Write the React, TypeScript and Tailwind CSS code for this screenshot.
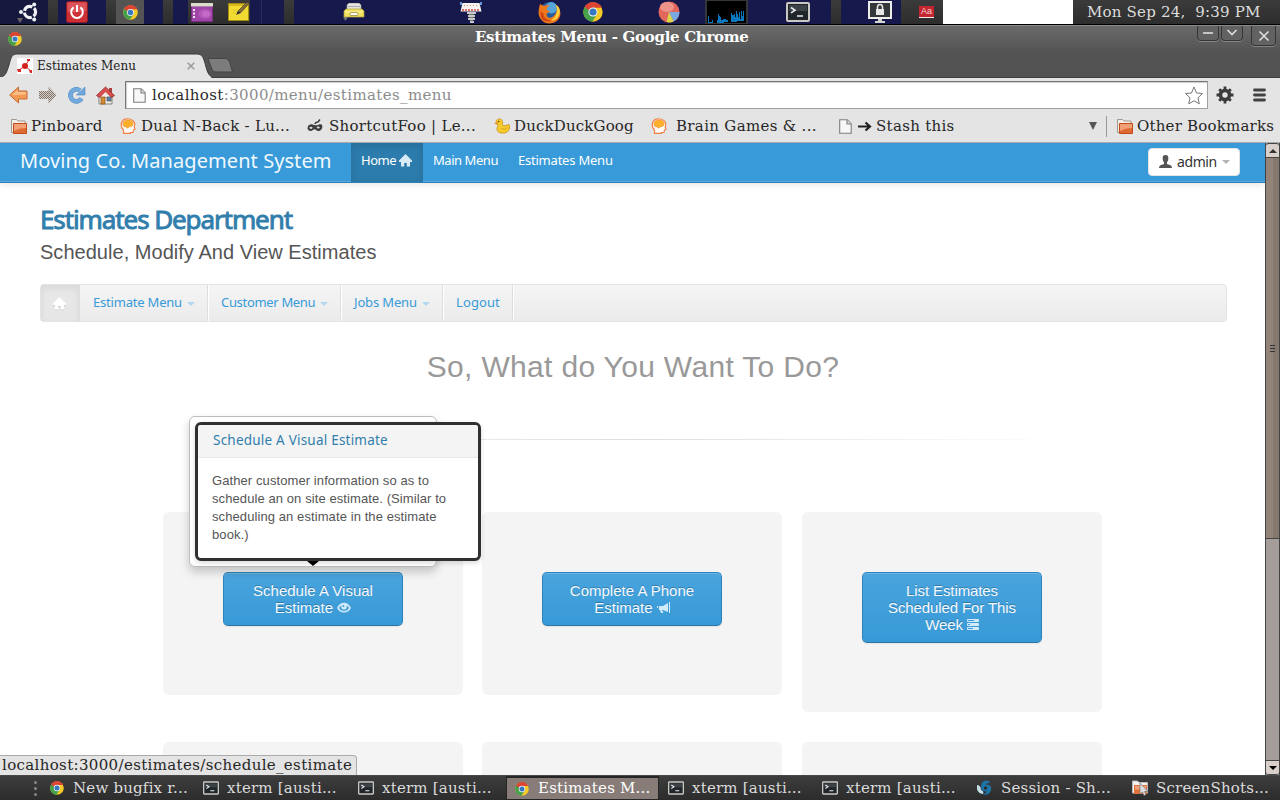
import React from 'react';

type P = { className?: string };

const slab = "font-['DejaVu_Serif',serif] whitespace-pre";
const human = "font-['Noto_Sans',sans-serif] whitespace-nowrap";
const arial = "font-['Liberation_Sans',Arial,sans-serif]";

function Chrome({ className = 'size-4' }: P) {
  return (
    <svg viewBox="0 0 20 20" className={className + ' shrink-0'}>
      <circle cx="10" cy="10" r="9.7" fill="#f5c927" />
      <path d="M10 10 1.6 5.1A9.7 9.7 0 0 1 18.7 5.6H10Z" fill="#dc4434" />
      <path d="M1.6 5.1A9.7 9.7 0 0 0 9.2 19.7L13.9 12.2 10 10Z" fill="#47a14a" />
      <path d="M1.6 5.1 6 12.3 10 10V5.6Z" fill="#47a14a" />
      <path d="M1.6 5.1A9.7 9.7 0 0 1 18.7 5.6H10L6.1 8.5Z" fill="#dc4434" />
      <circle cx="10" cy="10" r="4.6" fill="#f4f7fa" />
      <circle cx="10" cy="10" r="3.6" fill="#3878c0" />
    </svg>
  );
}

function Ubuntu() {
  return (
    <svg viewBox="0 0 24 24" className="h-6 w-6">
      <path d="M1 18h6l-3 5z" fill="#666" />
      <circle cx="14" cy="12" r="5.6" fill="none" stroke="#eef0f4" strokeWidth="3.2" strokeDasharray="9.8 1.9" strokeDashoffset="5" />
      <circle cx="5" cy="12" r="2" fill="#eef0f4" />
      <circle cx="18.2" cy="4.6" r="2" fill="#eef0f4" />
      <circle cx="18.2" cy="19.4" r="2" fill="#eef0f4" />
    </svg>
  );
}

function Power() {
  return (
    <svg viewBox="0 0 22 22" className="size-[22px]">
      <rect x=".5" y=".5" width="21" height="21" rx="2" fill="#cd2f35" stroke="#8e1b20" />
      <path d="M1.5 1.5h19v8q-9 3-19 1z" fill="#dc5459" />
      <path d="M7.6 6.4a5.8 5.8 0 1 0 6.8 0M11 4v7" fill="none" stroke="#fff" strokeWidth="2" />
    </svg>
  );
}

function PurpleWindow() {
  return (
    <svg viewBox="0 0 22 19" className="h-[19px] w-[22px]">
      <rect width="22" height="19" fill="#7b2d84" />
      <rect x="1" y="4" width="20" height="14" fill="#a045a8" />
      <ellipse cx="14" cy="11" rx="6.500" ry="5" fill="#b457b9" />
      <ellipse cx="15" cy="11" rx="4" ry="3" fill="#c46bc8" />
      <rect width="22" height="3.5" fill="#dcdccd" />
      <path d="M2 6h2v2H2zM2 9.500h2v2H2zM2 13h2v2H2z" fill="#f3e7f3" />
    </svg>
  );
}

function Note() {
  return (
    <svg viewBox="0 0 22 20" className="h-5 w-[22px]">
      <rect x=".5" y="1.5" width="20" height="17" fill="#f2dc32" stroke="#a78c12" />
      <rect x="1" y="2" width="19" height="2" fill="#d6b820" />
      <path d="M4 8h5M4 11h4" stroke="#dfc62a" />
      <path d="m9 11 2-3 8-8 2 1.500-8 9z" fill="#8a6a3a" stroke="#443" strokeWidth=".7" />
      <path d="m8 13 2-4 3 2z" fill="#333" />
    </svg>
  );
}

function Drawer() {
  return (
    <svg viewBox="0 0 22 18" className="h-[18px] w-[22px]">
      <path d="M4 7V2l2-2h10l2 2v5z" fill="#e5e5df" stroke="#9b9b92" strokeWidth=".7" />
      <path d="M5 3.500h12" stroke="#aaa" />
      <path d="M1 8l2-2h16l2 2v6H1z" fill="#f2e15c" stroke="#b2a03b" strokeWidth=".7" />
      <path d="M2 9h18" stroke="#fdf6ae" />
      <rect x="7" y="9.500" width="8" height="3" rx="1" fill="#fffef3" stroke="#998a3c" strokeWidth=".8" />
      <path d="M0 14h5l-2.500 4z" fill="#777" />
    </svg>
  );
}

function Shutter() {
  return (
    <svg viewBox="0 0 22 21" className="h-[21px] w-[22px]">
      <path d="M1 0v3M21 0v3" stroke="#6a94da" strokeWidth="2" />
      <path d="M2.500 1h17l2 8.500H.5z" fill="#f6f2ef" />
      <path d="M2 8h18" stroke="#d04945" strokeWidth="1.500" strokeDasharray="2 1" />
      <path d="M4 3.500h14" stroke="#d98a87" strokeDasharray="1 2" />
      <path d="M7 10h9v2H7zM8 13h7v2H8zM8 16h7v2H8zM10 19h4v2h-4z" fill="#c9c9c9" />
      <path d="M9 12h5v1H9zM9 15h5v1H9zM10 18h3v1h-3z" fill="#777" />
    </svg>
  );
}

function Firefox() {
  return (
    <svg viewBox="0 0 24 24" className="size-[23px]">
      <circle cx="12" cy="11" r="10" fill="#245c9d" />
      <circle cx="14" cy="7" r="6" fill="#55a5dc" />
      <path d="M2 3c2 1 3 2 5 2 2-1 4-1 5 0-2 1-3 2-3 4 1 1 3 1 4 2-2 1-4 1-4 4 1 3 5 3 7 1 4-4 5-8 2-12 5 3 7 9 4 14-4 7-15 7-19 1C-1 14 1 8 2 3z" fill="#ef781b" />
      <path d="M2 5c0 5 1 7 4 8-1 4 4 8 9 7-5 3-11 1-12-4z" fill="#cf4314" />
      <path d="M19 4c5 3 5 10 1 14-2 2-5 3-7 2 6-2 8-9 6-16z" fill="#f8cf3d" />
    </svg>
  );
}

function Pie() {
  return (
    <svg viewBox="0 0 22 22" className="size-[22px]">
      <circle cx="11" cy="11" r="10.500" fill="#e2665b" />
      <ellipse cx="9" cy="6" rx="7" ry="5" fill="#ed938a" />
      <path d="M11 11h10.500A10.500 10.500 0 0 1 15.500 20.500z" fill="#7aa8e0" />
      <path d="M11 11 15.500 20.500A10.500 10.500 0 0 1 8.500 21z" fill="#dbd647" />
    </svg>
  );
}

function CpuGraph() {
  return (
    <svg viewBox="0 0 43 25" className="h-[25px] w-[43px]" shapeRendering="crispEdges">
      <rect width="43" height="25" fill="#34363a" />
      <rect x="2" y="1" width="39" height="22" fill="#000" />
      <path d="M3 23v-7h1v6h3v-2h1v3zM12 23v-3h1v-6h1v2h1v1h1v3h2v-1h3v1h2v2h3v-9h1v2h2v-1h1v3h1v-6h1v3h1v3h1v-5h1v7h1v-8h1v5h1v-5h1v10z" fill="#0877bd" />
    </svg>
  );
}

function Term({ className = 'h-[14px] w-4' }: P) {
  return (
    <svg viewBox="0 0 24 20" className={className + ' shrink-0'}>
      <rect x="1" y="1" width="22" height="18" rx="1" fill="#202629" stroke="#c9c9c4" strokeWidth="2" />
      <path d="M3 3h18v6H3z" fill="#3b4347" />
      <path d="m5 5.500 4 2.700-4 2.700M11 14h6" fill="none" stroke="#eee" strokeWidth="1.600" />
    </svg>
  );
}

function LockScreen() {
  return (
    <svg viewBox="0 0 24 22" className="h-[22px] w-6">
      <rect x="1" y="1" width="22" height="16" fill="#33373a" stroke="#ecece8" strokeWidth="2" />
      <path d="M9.500 8V6a2.500 2.500 0 0 1 5 0v2" fill="none" stroke="#e6e6e6" strokeWidth="1.500" />
      <path d="M8 8h8v6H8z" fill="#e6e6e6" />
      <path d="M10 18h4v2h3v2H7v-2h3z" fill="#d5d5d0" />
    </svg>
  );
}

function Folder() {
  return (
    <svg viewBox="0 0 16 15" className="h-[15px] w-4 shrink-0">
      <path d="M.5 13.500V.5h5l1.500 1.500h7v11.500z" fill="#f3eee9" stroke="#a3968d" />
      <path d="M2.500 4.500h13v10h-13z" fill="#e06a33" stroke="#c04a18" />
      <path d="M3 5h12v4q-7 0-12 3z" fill="#f0a175" />
    </svg>
  );
}

function Brain() {
  return (
    <svg viewBox="0 0 16 16" className="size-4 shrink-0">
      <path d="M3.500 15v-3C-.5 8 1 1 7 .8c6-.5 9 4 7.200 8l.8 2.200-1.500 1-.5 2.500h-2.500V15.400H3.500z" fill="#fffaf4" stroke="#ef8148" strokeWidth="1.200" />
      <path d="M3 6c0-3 3-4.500 6-4 3.500.5 5 3 3.500 5.500-1 1.500-3 .5-4 2-1 1-2.500 0-2.500-1C4 9 3 8 3 6z" fill="#fbb12b" stroke="#f5851e" strokeWidth=".6" />
    </svg>
  );
}

function Mask() {
  return (
    <svg viewBox="0 0 16 14" className="h-[14px] w-4 shrink-0">
      <path d="M1 7c2-2 4-2 6-1 1.500.5 3 .5 5-.5 3-1 4 1 3 4-1 2.500-4 3.500-6 1.500-1-1-2-1-3 0C3.500 13 1 11.500.5 9.500z" fill="#3c3c3c" />
      <path d="M8 5c.5-2 1.500-2 3-2l2-2.500" fill="none" stroke="#3c3c3c" strokeWidth="1.500" />
      <ellipse cx="4" cy="8.800" rx="1.600" ry="1.100" fill="#ddd" />
      <ellipse cx="11.200" cy="8.500" rx="1.600" ry="1.100" fill="#ddd" />
    </svg>
  );
}

function Duck() {
  return (
    <svg viewBox="0 0 16 16" className="size-4 shrink-0">
      <path d="M2 3.500C3 0 8 0 8.500 3.500 9 6 8 7 9 7.500c2 1 4-1 6-1 1.500 3 0 8-4.500 8.500C6 15.500 3 14 3 11c0-2 1-3 1-4L2.500 6z" fill="#f6cb2e" stroke="#c98d13" strokeWidth=".8" />
      <path d="M0 5.500 3.500 4v2.500z" fill="#e9851e" />
      <circle cx="4.700" cy="3.500" r=".8" fill="#543c0a" />
      <path d="M7 10c2 2 5 1.500 6-.5" fill="none" stroke="#d89b18" />
    </svg>
  );
}

function Page({ className = 'h-[15px] w-[13px]' }: P) {
  return (
    <svg viewBox="0 0 13 15" className={className + ' shrink-0'}>
      <path d="M.7.700h7.500l4 4v9.600H.7z" fill="#f7f7f7" stroke="#7d7d7d" strokeWidth="1.100" />
      <path d="M8 1v4h4" fill="#ddd" stroke="#7d7d7d" strokeWidth="1.100" />
    </svg>
  );
}

function Arrow({ forward }: { forward?: boolean }) {
  return (
    <svg viewBox="0 0 19 18" className="h-[18px] w-[19px] shrink-0">
      {forward ? (
        <>
          <defs>
            <pattern id="dither" width="2" height="2" patternUnits="userSpaceOnUse">
              <rect width="2" height="2" fill="#d8cdc4" />
              <path d="M0 0h1v1H0zM1 1h1v1H1z" fill="#81776e" />
            </pattern>
          </defs>
          <path d="M18.500 9 10.500.500V5H1v8h9.500v4.500z" fill="url(#dither)" />
        </>
      ) : (
        <>
          <path d="M.7 9 9.500 1v4H18v8H9.500v4z" fill="#f39a50" stroke="#c56a37" />
          <path d="m3 9 5.500-5v2H17v2.500z" fill="#f9c08c" />
        </>
      )}
    </svg>
  );
}

function Reload() {
  return (
    <svg viewBox="0 0 19 18" className="h-[18px] w-[19px] shrink-0">
      <path d="M14.500 12.500A6 6 0 1 1 13 4.500" fill="none" stroke="#4f88c0" strokeWidth="4.600" />
      <path d="M14.500 12.500A6 6 0 1 1 13 4.500" fill="none" stroke="#72aade" strokeWidth="3.700" />
      <path d="M18 1v8H9.500z" fill="#6da6dc" stroke="#4f88c0" strokeWidth=".6" />
    </svg>
  );
}

function HomeColor() {
  return (
    <svg viewBox="0 0 19 19" className="size-[19px] shrink-0">
      <path d="M3 9h13v9H3z" fill="#f0ede7" stroke="#85807a" />
      <path d="M13 2h3v6h-3z" fill="#ac4141" />
      <path d="m9.500 1 9 8.500-2 1.500H2.500L.5 9.500z" fill="#d74e4f" stroke="#8f2e2f" strokeWidth=".8" />
      <path d="m9.500 6 5 5h-10z" fill="#f0ede7" />
      <path d="M5 11h4v7H5z" fill="#d58b35" stroke="#87551c" strokeWidth=".7" />
      <path d="M11 11h4v4h-4z" fill="#5b85ba" stroke="#555" strokeWidth=".7" />
    </svg>
  );
}

function House({ className = 'size-[13px]' }: P) {
  return (
    <svg viewBox="0 0 13 13" className={className + ' inline-block shrink-0'} fill="currentColor">
      <path d="M6.500 0 13 6.500V8h-2v4.500H7.800V9H5.200v3.500H2V8H0V6.500z" />
    </svg>
  );
}

function Caret({ className = 'border-t-[#b0d5ef]' }: P) {
  return <span className={'inline-block h-0 w-0 border-x-4 border-t-4 border-x-transparent ' + className} />;
}

function Swirl() {
  return (
    <svg viewBox="0 0 16 16" className="size-4 shrink-0">
      <path d="M7 1c3-1 6 0 6 2-2 0-4 0-4 2 4-1 6 2 5 5-1 4-5 6-9 4 3 0 5-1 4-3-3 1-5-1-5-4 0-3 1-5 3-6z" fill="#1c74a9" />
      <path d="M0 5c3 0 4 3 4 5 2 1 3 2 2 4-5 0-7-5-6-9z" fill="#c5dfe9" />
      <circle cx="8.500" cy="8" r="1.700" fill="#292d30" />
    </svg>
  );
}

function FolderCursor() {
  return (
    <svg viewBox="0 0 17 16" className="h-4 w-[17px] shrink-0">
      <path d="M.5 13V1h5l1.500 1.500h8.500V13z" fill="#f6f3ee" stroke="#bbb" />
      <path d="M2 5h13v9H2z" fill="#e3713d" />
      <path d="M3 6h11v3.500H3z" fill="#eda27f" />
      <path d="M8 3v11l2.500-2 1.500 3.500 2-1-1.500-3H16z" fill="#ddd" stroke="#777" strokeWidth=".7" />
    </svg>
  );
}

const navy = 'bg-[#17184c]';
const dark = 'bg-linear-to-b from-[#3b3b3b] to-[#2d2d2d]';

function Seg({ className, children }: { className: string; children?: React.ReactNode }) {
  return <div className={'flex h-6 shrink-0 items-center ' + className}>{children}</div>;
}

function TopPanel() {
  return (
    <div className="flex h-[25px] shrink-0 items-start overflow-hidden border-b border-black bg-[#303030]">
      <Seg className="w-12 bg-[#16183d] pl-4"><Ubuntu /></Seg>
      <Seg className={'w-[10px] ' + dark} />
      <Seg className={'w-12 justify-center pr-[10px] ' + navy}><Power /></Seg>
      <Seg className={'w-[10px] ' + dark} />
      <Seg className="w-7 justify-center bg-[#545454]"><Chrome className="size-[15px]" /></Seg>
      <Seg className={'w-[19px] ' + navy} />
      <Seg className={'w-[10px] ' + dark} />
      <Seg className={'w-[15px] ' + navy} />
      <Seg className={'w-[62px] pl-[3px] ' + dark}><PurpleWindow /><span className="w-[15px]" /><Note /></Seg>
      <Seg className={'w-[34px] ' + navy}><span className="ml-[11px] h-6 w-px bg-[#292b58]" /></Seg>
      <Seg className={'w-[10px] ' + dark} />
      <Seg className={'w-[537px] pl-[49px] ' + navy}>
        <Drawer />
        <span className="ml-[95px]"><Shutter /></span>
        <span className="ml-[56px]"><Firefox /></span>
        <span className="ml-[22px]"><Chrome className="size-5" /></span>
        <span className="ml-[55px]"><Pie /></span>
        <span className="ml-[25px]"><CpuGraph /></span>
        <span className="ml-[38px]"><Term className="h-5 w-6" /></span>
      </Seg>
      <Seg className={'w-[10px] ' + dark} />
      <Seg className={'w-[60px] pl-[27px] ' + navy}><LockScreen /></Seg>
      <Seg className={'w-[42px] pl-[18px] ' + dark}>
        <div className={'flex h-[12px] w-[15px] items-center justify-center border-b border-[#eee] bg-[#c4262f] text-[9px] leading-none text-[#f3d3d3] ' + arial}>Aa</div>
      </Seg>
      <Seg className="w-[130px] bg-white" />
      <Seg className={'w-[207px] pl-[14px] text-[#dcdcdc] ' + dark}>
        <span className={slab + ' text-[15px] tracking-[0.2px]'}>Mon Sep 24,  9:39 PM</span>
      </Seg>
    </div>
  );
}

function WinBtn({ className, d }: { className: string; d: string }) {
  return (
    <div className={'flex justify-center rounded-b-[4px] border border-t-0 border-[#353535] bg-[#626262] shadow-[0_1px_0_#858585] ' + className}>
      <svg viewBox="0 0 12 12" className="size-3" fill="none" stroke="#dedede" strokeWidth="1.600"><path d={d} /></svg>
    </div>
  );
}

function WindowFrame() {
  return (
    <div className="flex h-[53px] shrink-0 flex-col bg-linear-to-b from-[#6b6b6b] via-[#545454] to-[#525252]">
      <div className="flex h-[28px] shrink-0 items-start border-t border-[#8a8a8a]">
        <div className="w-[475px] pt-[6px] pl-2"><Chrome className="size-[14px]" /></div>
        <div className={slab + ' w-[722px] pt-px text-[15px] leading-[21px] font-bold tracking-[-0.31px] text-white'}>Estimates Menu - Google Chrome</div>
        <div className="flex gap-[2px]">
          <WinBtn className="h-[15px] w-[22px] pt-px" d="M1 6h10" />
          <WinBtn className="h-[15px] w-[22px]" d="m1.500 4 4.500 4.500L10.500 4" />
          <WinBtn className="ml-[6px] h-[20px] w-[25px] pt-[4px]" d="m1.500 1.500 9 9m0-9-9 9" />
        </div>
      </div>
      <div className="relative flex h-[25px] items-center">
        <svg viewBox="0 0 240 25" className="absolute top-0 left-0 h-[25px] w-[240px]">
          <path d="M0 25C6 23 7 18 9 12 11 4 12 1 17 1h180c5 0 6 3 8 9 2 8 3 13 9 15z" fill="#e4e4e4" stroke="#3c3c3c" />
          <path d="M0 24h211v1H0z" fill="#e4e4e4" />
          <path d="M208 5.500h17c3 0 4 2 5 5l2.500 8.500h-16c-3 0-4-1-5-4z" fill="#7c7c7c" stroke="#444" />
          <path d="M212 24.500h28" stroke="#3c3c3c" />
        </svg>
        <span className="absolute bottom-0 left-[214px] h-px w-[1066px] bg-[#3c3c3c]" />
        <div className="relative flex h-full w-full items-center pt-px pl-[17px]">
          <svg viewBox="0 0 16 16" className="size-4"><path fill="#fff" d="M0 0h16v16H0z" /><path d="m8 8 4-6M8 8 2 12M8 8l6 5" stroke="#c33" /><circle cx="8" cy="8" r="3" fill="#d51f1f" /><path d="M10 1h3v2h-3zM0 11h4v3H1zM12 12h3v3h-2z" fill="#db2929" /></svg>
          <span className={slab + ' ml-1 w-[150px] text-[12px] text-[#1c1c1c]'}>Estimates Menu</span>
          <svg viewBox="0 0 8 8" className="size-[8px]"><path d="m.7.700 6.600 6.600m0-6.600L.7 7.300" stroke="#999" strokeWidth="1.500" /></svg>
        </div>
      </div>
    </div>
  );
}

function Toolbar() {
  return (
    <div className="flex h-[32px] shrink-0 items-center bg-[#e4e4e4] pt-[2px] pl-[9px]">
      <div className="flex w-[116px] items-center gap-[10px]"><Arrow /><Arrow forward /><Reload /><HomeColor /></div>
      <div className="flex h-[28px] w-[1083px] items-center border border-[#a0a0a0] border-t-[#767676] border-l-[#767676] bg-white pl-[7px] shadow-[inset_1px_1px_1px_#ccc]">
        <Page />
        <span className={slab + ' ml-[6px] w-[1032px] text-[15px] tracking-[0.37px] text-[#8c8c8c]'}><span className="text-[#2a2a2a]">localhost</span>:3000/menu/estimates_menu</span>
        <svg viewBox="0 0 20 19" className="h-[19px] w-5 shrink-0"><path d="m10 1 2.500 6 6 .500-4.500 4.300 1.300 6-5.300-3-5.300 3L6 11.800 1.500 7.500l6-.5z" fill="#fff" stroke="#777" strokeLinejoin="round" /></svg>
      </div>
      <svg viewBox="0 0 18 18" className="ml-2 size-[18px]"><path d="M9 .500v17M.500 9h17M3.200 3.200l11.600 11.600m0-11.600L3.200 14.800" stroke="#3b3b3b" strokeWidth="2.800" /><circle cx="9" cy="9" r="4.600" fill="none" stroke="#3b3b3b" strokeWidth="3.500" /><circle cx="9" cy="9" r="2.700" fill="#e4e4e4" /></svg>
      <svg viewBox="0 0 13 14" className="ml-[19px] h-[14px] w-[13px]"><path d="M1.500 2h10M1.500 7h10M1.500 12h10" stroke="#414141" strokeWidth="2.800" strokeLinecap="round" /></svg>
    </div>
  );
}

function Bookmark({ icon, text, w, cls }: { icon: React.ReactNode; text: string; w: string; cls: string }) {
  return (
    <div className={'flex shrink-0 items-center ' + w}>
      {icon}
      <span className={slab + ' text-[15px] text-[#262626] ' + cls}>{text}</span>
    </div>
  );
}

function Bookmarks() {
  return (
    <div className="flex h-[33px] shrink-0 items-center border-b border-[#a9a9a9] bg-[#e4e4e4] pl-[11px]">
      <Bookmark icon={<Folder />} text="Pinboard" w="w-[109px]" cls="ml-1 tracking-[0.35px]" />
      <Bookmark icon={<Brain />} text="Dual N-Back - Lu..." w="w-[187px]" cls="ml-[5px] tracking-[0.25px]" />
      <Bookmark icon={<Mask />} text="ShortcutFoo | Le..." w="w-[187px]" cls="ml-[6px] tracking-[0.28px]" />
      <Bookmark icon={<Duck />} text="DuckDuckGoog" w="w-[157px]" cls="ml-1 tracking-[0.15px]" />
      <Bookmark icon={<Brain />} text="Brain Games & ..." w="w-[188px]" cls="ml-[9px] tracking-[0.33px]" />
      <div className="flex w-[250px] items-center">
        <Page />
        <svg viewBox="0 0 14 10" className="ml-[6px] h-[11px] w-[14px]"><path d="M0 5h11M7.500 1l4.500 4-4.500 4" fill="none" stroke="#222" strokeWidth="2.200" /></svg>
        <span className={slab + ' ml-1 text-[15px] tracking-[0.3px] text-[#262626]'}>Stash this</span>
      </div>
      <span className="h-0 w-0 border-x-[4px] border-t-[8px] border-x-transparent border-t-[#555]" />
      <span className="mr-[10px] ml-[9px] h-[21px] w-px bg-[#999]" />
      <Bookmark icon={<Folder />} text="Other Bookmarks" w="w-[162px]" cls="ml-1 tracking-[0.2px]" />
    </div>
  );
}

function AppNav() {
  return (
    <div className="flex h-10 shrink-0 border-b border-[#2f7fb5] bg-[#389ad8] pl-5 text-white shadow-[0_1px_8px_rgba(0,0,0,0.12),inset_0_-1px_0_#5aa9da]">
      <div className={human + ' w-[331px] text-[20px] leading-[36px] tracking-[0.07px] text-[#f1f8fd]'}>Moving Co. Management System</div>
      <div className={human + ' flex w-[72px] items-center gap-[3px] bg-[#2c7cad] pb-[4px] pl-[10px] text-[13px] tracking-[-0.5px] shadow-[inset_0_3px_8px_rgba(0,0,0,0.13)]'}>Home <House className="size-[13px] text-[#d8eaf5]" /></div>
      <div className={human + ' w-[84px] pl-[10px] text-[13px] leading-[35px] tracking-[-0.45px]'}>Main Menu</div>
      <div className={human + ' w-[641px] pl-[11px] text-[13px] leading-[35px] tracking-[-0.22px]'}>Estimates Menu</div>
      <div className={human + ' mt-[5px] flex h-[28px] w-[92px] items-center rounded-[4px] border border-[#e4e4e4] bg-white pb-[2px] pl-[10px] text-[14px] tracking-[-0.4px] text-[#333]'}>
        <svg viewBox="0 0 13 13" className="mr-[5px] h-[13px] w-[13px]" fill="#555"><path d="M6.500 0C9 0 9.500 1.500 9.300 4c-.1 1.600-.7 2.700-1.300 3.300V9l3.500 1.200c1 .4 1.200 1.200 1.500 2.800H0c.3-1.600.5-2.400 1.500-2.800L5 9V7.300C4.400 6.700 3.800 5.600 3.700 4 3.500 1.500 4 0 6.500 0z" /></svg>
        admin <Caret className="mt-px ml-[5px] border-t-[#b3b3b3]" />
      </div>
    </div>
  );
}

function SubNav() {
  const item = human + ' flex items-center border-r border-[#dedede] pb-[1px] pl-[13px] text-[13px] text-[#389ad8] shadow-[1px_0_0_#fff] ';
  return (
    <div className="mt-[18px] flex h-[38px] w-[1187px] shrink-0 rounded-[4px] border border-[#e3e3e3] bg-linear-to-b from-[#f5f5f5] to-[#ebebeb]">
      <div className="flex w-[39px] items-center justify-center border-r border-[#ddd] bg-[#e7e7e7] pt-[1px] pr-[2px] text-white shadow-[inset_0_3px_7px_rgba(0,0,0,0.07)]"><House className="size-[13px] drop-shadow-[0_1px_0_#ccc]" /></div>
      <div className={item + 'w-[128px] tracking-[-0.2px]'}>Estimate Menu <Caret className="mt-[2px] ml-[5px] border-t-[#b3d7ee]" /></div>
      <div className={item + 'w-[133px] tracking-[-0.32px]'}>Customer Menu <Caret className="mt-[2px] ml-[5px] border-t-[#b3d7ee]" /></div>
      <div className={item + 'w-[102px] tracking-[-0.15px]'}>Jobs Menu <Caret className="mt-[2px] ml-[5px] border-t-[#b3d7ee]" /></div>
      <div className={item + 'w-[70px] tracking-[0.1px]'}>Logout</div>
    </div>
  );
}

function ActionCard({ className, children }: { className: string; children?: React.ReactNode }) {
  return (
    <div className={'w-[300px] shrink-0 rounded-[6px] bg-[#f4f4f4] pt-[60px] ' + className}>
      {children && (
        <div className={arial + ' mx-auto w-[180px] rounded-[5px] border border-[#2f83bd] border-b-[#2a74a6] bg-linear-to-b from-[#4aa4dd] to-[#379ad7] pt-[9px] pb-[9px] text-center text-[15px] leading-[17px] text-[#f4faff] shadow-[inset_0_1px_0_rgba(255,255,255,0.2),0_1px_2px_rgba(0,0,0,0.06)] [text-shadow:0_-1px_0_rgba(0,0,0,0.25)]'}>
          {children}
        </div>
      )}
    </div>
  );
}

function Popover() {
  return (
    <div className="absolute top-[273px] left-[189px] h-[151px] w-[248px] rounded-[6px] border border-[#bdbdbd] bg-white shadow-[0_5px_10px_rgba(0,0,0,0.2)]">
      <div className="absolute top-[5px] left-[5px] h-[139px] w-[286px] rounded-[6px] border-[3px] border-[#303030] bg-white shadow-[0_2px_5px_rgba(0,0,0,0.15)]">
        <div className={human + ' h-[33px] rounded-t-[3px] border-b border-[#e8e8e8] bg-[#f4f4f4] pl-[15px] text-[13.5px] leading-[30px] tracking-[0.22px] text-[#317eac]'}>Schedule A Visual Estimate</div>
        <p className={arial + ' pt-[14px] pl-[14px] text-[13px] leading-[18px] tracking-[0.09px] text-[#555]'}>
          Gather customer information so as to<br />schedule an on site estimate. (Similar to<br />scheduling an estimate in the estimate<br />book.)
        </p>
      </div>
      <span className="absolute top-[144px] left-[117px] h-0 w-0 border-x-[6px] border-t-[5px] border-x-transparent border-t-black" />
    </div>
  );
}

function Scrollbar() {
  return (
    <div className="flex w-[15px] shrink-0 flex-col border-x border-[#444] bg-[#a59d99]">
      <div className="flex h-[14px] items-center justify-center rounded-t-[3px] border-t border-[#444] bg-[#d9d0cb]"><span className="border-x-[4px] border-b-[4px] border-x-transparent border-b-[#333]" /></div>
      <div className="flex h-[382px] flex-col items-center justify-center gap-[2px] border-y border-[#444] bg-linear-to-r from-[#938379] from-55% to-[#85786f] to-55%">
        <i className="h-px w-[5px] bg-[#333]" /><i className="h-px w-[5px] bg-[#333]" /><i className="h-px w-[5px] bg-[#333]" />
      </div>
      <div className="grow" />
      <div className="flex h-[15px] items-center justify-center rounded-b-[3px] border-y border-[#444] bg-[#d9d0cb]"><span className="border-x-[4px] border-t-[4px] border-x-transparent border-t-black" /></div>
    </div>
  );
}

function Content() {
  return (
    <div className="relative flex h-[632px] shrink-0 overflow-hidden bg-white">
      <div className="flex w-[1265px] shrink-0 flex-col">
        <AppNav />
        <div className="flex h-[592px] flex-col pl-10">
          <h1 className={human + ' mt-[18px] mb-px h-[36px] shrink-0 text-[26px] leading-[36px] tracking-[-1.1px] text-[#317eac] [-webkit-text-stroke:0.9px_#317eac]'}>Estimates Department</h1>
          <h2 className={arial + ' h-[28px] shrink-0 text-[20px] leading-[28px] tracking-[0.03px] text-[#555]'}>Schedule, Modify And View Estimates</h2>
          <SubNav />
          <div className={arial + ' mt-[27px] h-[36px] w-[1186px] shrink-0 text-center text-[30px] leading-[36px] tracking-[0.33px] text-[#999]'}>So, What do You Want To Do?</div>
          <div className="mt-[54px] ml-[160px] h-px w-[866px] shrink-0 bg-linear-to-r from-white via-[#dedede] to-white" />
          <div className="mt-[72px] flex h-[230px] shrink-0 items-start pl-[123px]">
            <ActionCard className="h-[183px]">
              Schedule A Visual<br />Estimate <svg viewBox="0 0 14 12" className="inline-block h-3 w-[14px] align-[-1px]"><path d="M0 6c3-7 11-7 14 0-3 6-11 6-14 0z" fill="#d3eafa" /><path d="M2 6c2 4 8 4 10 0-.5-1-1.500-2-2.500-2.500H4.500C3.500 4 2.500 5 2 6z" fill="#3e9dd9" /><circle cx="7" cy="4.800" r="2.800" fill="#d3eafa" /><circle cx="6.400" cy="4" r="1" fill="#3e9dd9" /></svg>
            </ActionCard>
            <ActionCard className="ml-[19px] h-[183px]">
              Complete A Phone<br />Estimate <svg viewBox="0 0 13 12" className="inline-block h-3 w-[13px] align-[-1px]" fill="#d3eafa"><path d="M12 0h1v11h-1zM11 1v9L6 8H2V4h4zM0 4h1v2H0zM3 8h2l1.500 3H4z" /></svg>
            </ActionCard>
            <ActionCard className="ml-[20px] h-[200px] tracking-[-0.1px]">
              List Estimates<br />Scheduled For This<br />Week <svg viewBox="0 0 12 12" className="inline-block size-3 align-[-1px]" fill="none" stroke="#d3eafa"><path d="M.5.500h11v2H.5zM.5 4.500h11v2H.5zM.5 8.500h11v2H.5zM7 1.500h4M3 5.500h8M6 9.500h5" /></svg>
            </ActionCard>
          </div>
          <div className="flex shrink-0 pl-[123px]">
            <ActionCard className="h-[183px]" />
            <ActionCard className="ml-[19px] h-[183px]" />
            <ActionCard className="ml-[20px] h-[183px]" />
          </div>
        </div>
      </div>
      <Scrollbar />
      <Popover />
      <div className={slab + ' absolute bottom-0 left-0 h-5 w-[357px] rounded-tr-[4px] border-t border-r border-[#aaa] bg-[#e4e4e4] pl-[2px] text-[15px] leading-[18px] tracking-[0.35px] text-[#262626]'}>localhost:3000/estimates/schedule_estimate</div>
    </div>
  );
}

function Task({ icon, text, w, gap }: { icon: React.ReactNode; text: string; w: string; gap: string }) {
  return (
    <div className={'flex shrink-0 items-center overflow-hidden ' + w}>
      {icon}
      <span className={slab + ' text-[15px] tracking-[0.2px] text-[#dcdcdc] ' + gap}>{text}</span>
    </div>
  );
}

function Taskbar() {
  return (
    <div className="flex h-[25px] shrink-0 border-t border-[#484848] bg-linear-to-b from-[#3d3d3d] to-[#2c2c2c]">
      <div className="flex w-[50px] flex-col items-start justify-center gap-[3px] pl-[34px]">
        <i className="size-[3px] rounded-full bg-[#888]" /><i className="size-[3px] rounded-full bg-[#888]" /><i className="size-[3px] rounded-full bg-[#888]" />
      </div>
      <Task icon={<Chrome className="size-[14px]" />} text="New bugfix r..." w="w-[153px]" gap="ml-[9px]" />
      <Task icon={<Term />} text="xterm [austi..." w="w-[155px]" gap="ml-[8px]" />
      <Task icon={<Term />} text="xterm [austi..." w="w-[148px]" gap="ml-[8px]" />
      <Task icon={<Chrome className="size-[14px]" />} text="Estimates M..." w="w-[153px] mr-[9px] border border-t-2 border-[#252525] bg-[#877c78] pl-[8px]" gap="ml-[9px] text-white" />
      <Task icon={<Term />} text="xterm [austi..." w="w-[154px]" gap="ml-[8px]" />
      <Task icon={<Term />} text="xterm [austi..." w="w-[155px]" gap="ml-[8px]" />
      <Task icon={<Swirl />} text="Session - Sh..." w="w-[155px]" gap="ml-[8px]" />
      <Task icon={<FolderCursor />} text="ScreenShots..." w="w-[148px]" gap="ml-[7px]" />
    </div>
  );
}

export default function App() {
  return (
    <div className="flex h-[800px] w-[1280px] flex-col overflow-hidden bg-white">
      <TopPanel />
      <WindowFrame />
      <Toolbar />
      <Bookmarks />
      <Content />
      <Taskbar />
    </div>
  );
}
